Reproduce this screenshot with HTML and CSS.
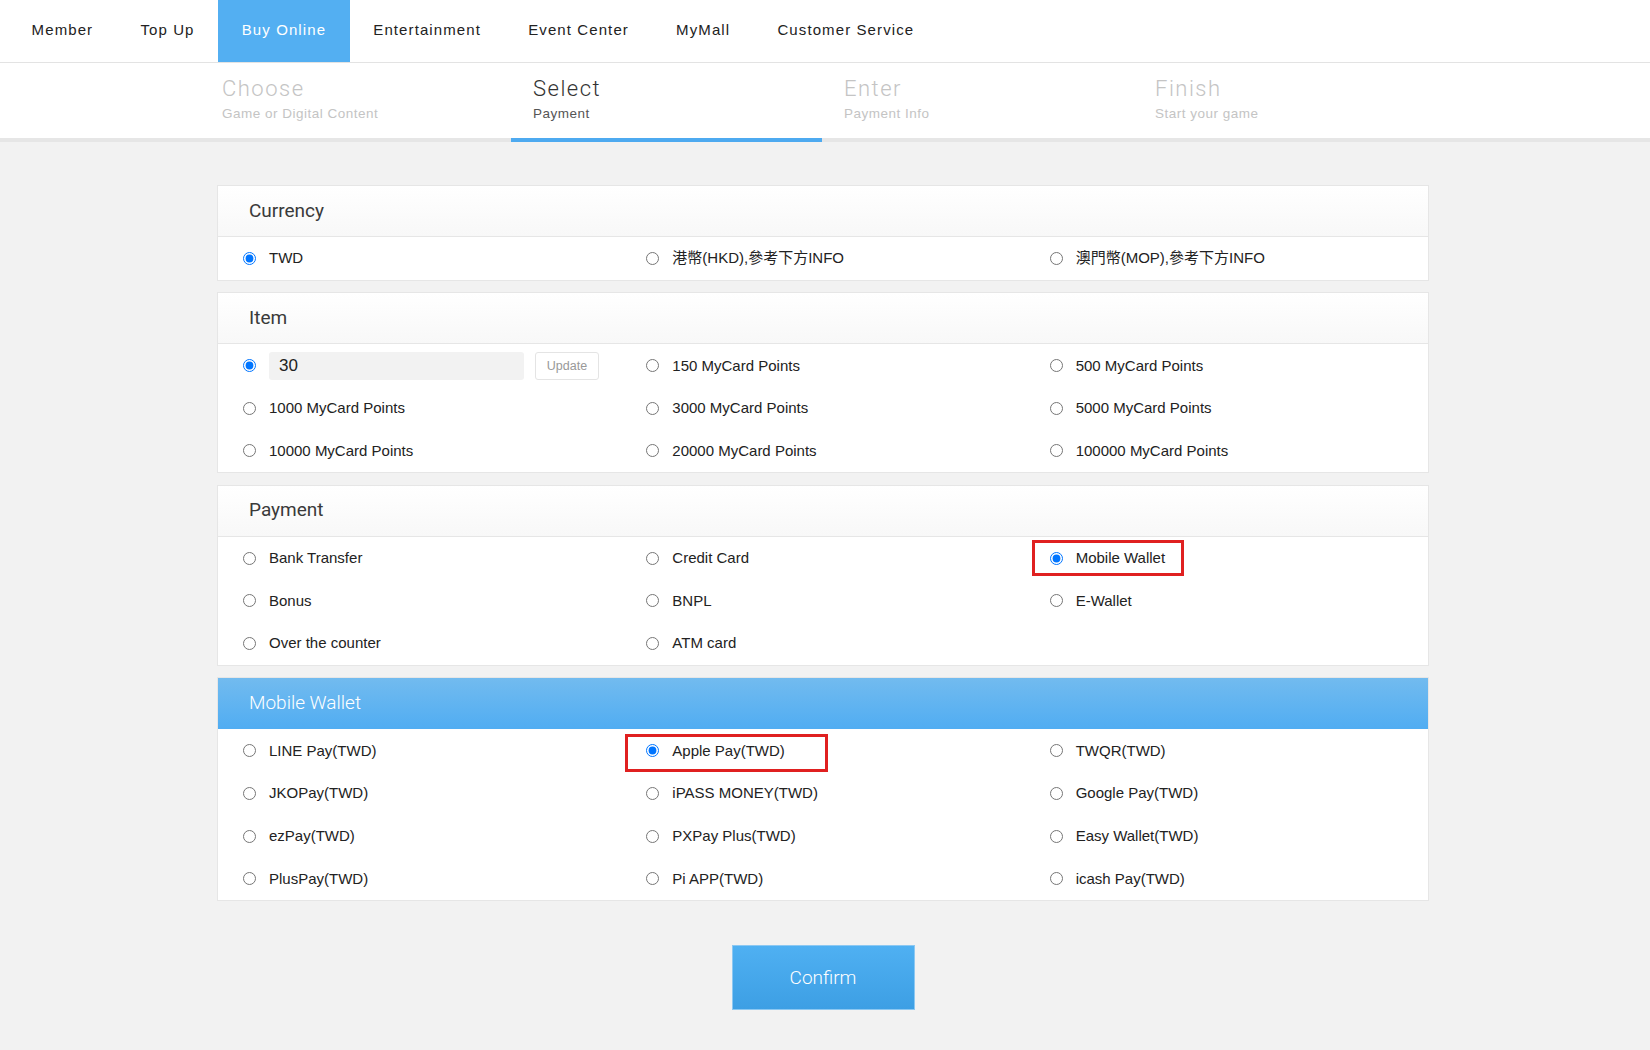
FILE: index.html
```html
<!DOCTYPE html>
<html lang="zh-Hant">
<head>
<meta charset="utf-8">
<title>Select Payment</title>
<link rel="stylesheet" href="styles.css">
</head>
<body>
<nav class="topnav">
  <a class="nav-item">Member</a>
  <a class="nav-item">Top Up</a>
  <a class="nav-item active">Buy Online</a>
  <a class="nav-item">Entertainment</a>
  <a class="nav-item">Event Center</a>
  <a class="nav-item">MyMall</a>
  <a class="nav-item">Customer Service</a>
</nav>

<div class="steps-bar">
  <div class="steps">
    <div class="step"><div class="step-title">Choose</div><div class="step-sub">Game or Digital Content</div></div>
    <div class="step current"><div class="step-title">Select</div><div class="step-sub">Payment</div></div>
    <div class="step"><div class="step-title">Enter</div><div class="step-sub">Payment Info</div></div>
    <div class="step"><div class="step-title">Finish</div><div class="step-sub">Start your game</div></div>
  </div>
</div>

<main class="content">
  <section class="panel">
    <div class="panel-head">Currency</div>
    <div class="opts">
      <label class="opt"><input type="radio" name="cur" checked><span class="lbl">TWD</span></label>
      <label class="opt"><input type="radio" name="cur"><span class="lbl">港幣(HKD),參考下方INFO</span></label>
      <label class="opt"><input type="radio" name="cur"><span class="lbl">澳門幣(MOP),參考下方INFO</span></label>
    </div>
  </section>

  <section class="panel">
    <div class="panel-head">Item</div>
    <div class="opts">
      <div class="opt"><input type="radio" name="item" checked><input class="amount" type="text" value="30"><button class="update">Update</button></div>
      <label class="opt"><input type="radio" name="item"><span class="lbl">150 MyCard Points</span></label>
      <label class="opt"><input type="radio" name="item"><span class="lbl">500 MyCard Points</span></label>
      <label class="opt"><input type="radio" name="item"><span class="lbl">1000 MyCard Points</span></label>
      <label class="opt"><input type="radio" name="item"><span class="lbl">3000 MyCard Points</span></label>
      <label class="opt"><input type="radio" name="item"><span class="lbl">5000 MyCard Points</span></label>
      <label class="opt"><input type="radio" name="item"><span class="lbl">10000 MyCard Points</span></label>
      <label class="opt"><input type="radio" name="item"><span class="lbl">20000 MyCard Points</span></label>
      <label class="opt"><input type="radio" name="item"><span class="lbl">100000 MyCard Points</span></label>
    </div>
  </section>

  <section class="panel">
    <div class="panel-head">Payment</div>
    <div class="opts">
      <label class="opt"><input type="radio" name="pay"><span class="lbl">Bank Transfer</span></label>
      <label class="opt"><input type="radio" name="pay"><span class="lbl">Credit Card</span></label>
      <label class="opt"><span class="hl hl-mw"><input type="radio" name="pay" checked><span class="lbl">Mobile Wallet</span></span></label>
      <label class="opt"><input type="radio" name="pay"><span class="lbl">Bonus</span></label>
      <label class="opt"><input type="radio" name="pay"><span class="lbl">BNPL</span></label>
      <label class="opt"><input type="radio" name="pay"><span class="lbl">E-Wallet</span></label>
      <label class="opt"><input type="radio" name="pay"><span class="lbl">Over the counter</span></label>
      <label class="opt"><input type="radio" name="pay"><span class="lbl">ATM card</span></label>
    </div>
  </section>

  <section class="panel">
    <div class="panel-head blue">Mobile Wallet</div>
    <div class="opts">
      <label class="opt"><input type="radio" name="mw"><span class="lbl">LINE Pay(TWD)</span></label>
      <label class="opt"><span class="hl hl-ap"><input type="radio" name="mw" checked><span class="lbl">Apple Pay(TWD)</span></span></label>
      <label class="opt"><input type="radio" name="mw"><span class="lbl">TWQR(TWD)</span></label>
      <label class="opt"><input type="radio" name="mw"><span class="lbl">JKOPay(TWD)</span></label>
      <label class="opt"><input type="radio" name="mw"><span class="lbl">iPASS MONEY(TWD)</span></label>
      <label class="opt"><input type="radio" name="mw"><span class="lbl">Google Pay(TWD)</span></label>
      <label class="opt"><input type="radio" name="mw"><span class="lbl">ezPay(TWD)</span></label>
      <label class="opt"><input type="radio" name="mw"><span class="lbl">PXPay Plus(TWD)</span></label>
      <label class="opt"><input type="radio" name="mw"><span class="lbl">Easy Wallet(TWD)</span></label>
      <label class="opt"><input type="radio" name="mw"><span class="lbl">PlusPay(TWD)</span></label>
      <label class="opt"><input type="radio" name="mw"><span class="lbl">Pi APP(TWD)</span></label>
      <label class="opt"><input type="radio" name="mw"><span class="lbl">icash Pay(TWD)</span></label>
    </div>
  </section>

  <div class="actions">
    <button class="confirm">Confirm</button>
  </div>
</main>
</body>
</html>
```

FILE: styles.css
```css
html, body {
  margin: 0;
  padding: 0;
}
body {
  background: #f2f2f2;
  font-family: "Liberation Sans", Arial, "Noto Sans CJK TC", sans-serif;
  color: #222;
  min-height: 1050px;
}

/* top navigation */
.topnav {
  display: flex;
  height: 63px;
  padding-left: 8px;
  background: #fff;
  border-bottom: 1px solid #e3e3e3;
  box-sizing: border-box;
}
.nav-item {
  display: flex;
  align-items: center;
  padding: 0 23.6px 4px;
  font-size: 15px;
  letter-spacing: 1.1px;
  color: #222;
  cursor: pointer;
}
.nav-item.active {
  background: #53aff2;
  color: #fff;
}

/* steps */
.steps-bar {
  background: #fff;
  border-bottom: 4px solid #e6e6e6;
  height: 75px;
}
.steps {
  display: flex;
  margin-left: 200px;
  height: 75px;
}
.step {
  width: 311px;
  padding: 13px 0 0 22px;
  box-sizing: border-box;
  color: #c4c4c4;
}
.step.current {
  border-bottom: 4px solid #4eaaf0;
  height: 79px;
  color: #333;
}
.step-title {
  font-family: Roboto, "Liberation Sans", sans-serif;
  font-weight: 300;
  font-size: 22px;
  line-height: 26px;
  letter-spacing: 1.5px;
}
.step-sub {
  margin-top: 4px;
  font-size: 13.5px;
  line-height: 16px;
  letter-spacing: 0.5px;
}
.step.current .step-sub { color: #555; }

/* content */
.content {
  width: 1212px;
  margin: 43px 0 0 217px;
}
.panel {
  background: #fff;
  border: 1px solid #e6e6e6;
  margin-bottom: 11.5px;
}
.panel-head {
  height: 51px;
  display: flex;
  align-items: center;
  padding-left: 31px;
  padding-bottom: 2px;
  box-sizing: border-box;
  font-family: Roboto, "Liberation Sans", sans-serif;
  font-size: 19px;
  color: #3a3a3a;
  background: linear-gradient(#ffffff, #f8f8f8);
  border-bottom: 1px solid #e6e6e6;
}
.panel-head.blue {
  color: #fff;
  font-weight: 300;
  background: linear-gradient(#72bbef, #51adf2);
  border-bottom-color: #51adf2;
}
.opts {
  display: grid;
  grid-template-columns: repeat(3, 1fr);
  grid-auto-rows: 42.7px;
}
.opt {
  display: flex;
  align-items: center;
  padding-left: 25px;
  font-size: 15px;
}
.opt input[type="radio"] {
  width: 13px;
  height: 13px;
  margin: 0;
  flex: none;
}
.lbl {
  margin-left: 13px;
  line-height: 18px;
  color: #222;
}

.amount {
  width: 255px;
  height: 28px;
  margin-left: 13px;
  box-sizing: border-box;
  border: none;
  border-radius: 3px;
  background: #f2f2f2;
  padding: 0 10px;
  font-family: "Liberation Sans", Arial, sans-serif;
  font-size: 17px;
  color: #222;
}
.update {
  margin-left: 11px;
  width: 64px;
  height: 28px;
  background: #fff;
  border: 1px solid #e4e4e4;
  border-radius: 3px;
  font-family: "Liberation Sans", Arial, sans-serif;
  font-size: 12.5px;
  color: #999;
  padding: 0;
}

/* red annotation boxes */
.hl {
  position: relative;
  display: inline-flex;
  align-items: center;
}
.hl::after {
  content: "";
  position: absolute;
  border: 3px solid #e02020;
}
.hl-mw::after {
  top: -9px;
  bottom: -9px;
  left: -18px;
  right: -19px;
}
.hl-ap::after {
  top: -8px;
  bottom: -12px;
  left: -21px;
  right: -43px;
}

/* confirm */
.actions {
  display: flex;
  justify-content: center;
  padding-top: 32px;
  padding-bottom: 41px;
}
.confirm {
  width: 183px;
  height: 65px;
  border: 1px solid #8cc8f2;
  background: linear-gradient(#4fb0f2, #3d9fe4);
  color: #fff;
  font-family: Roboto, "Liberation Sans", sans-serif;
  font-weight: 300;
  font-size: 19px;
  padding: 0;
  cursor: pointer;
}
```
